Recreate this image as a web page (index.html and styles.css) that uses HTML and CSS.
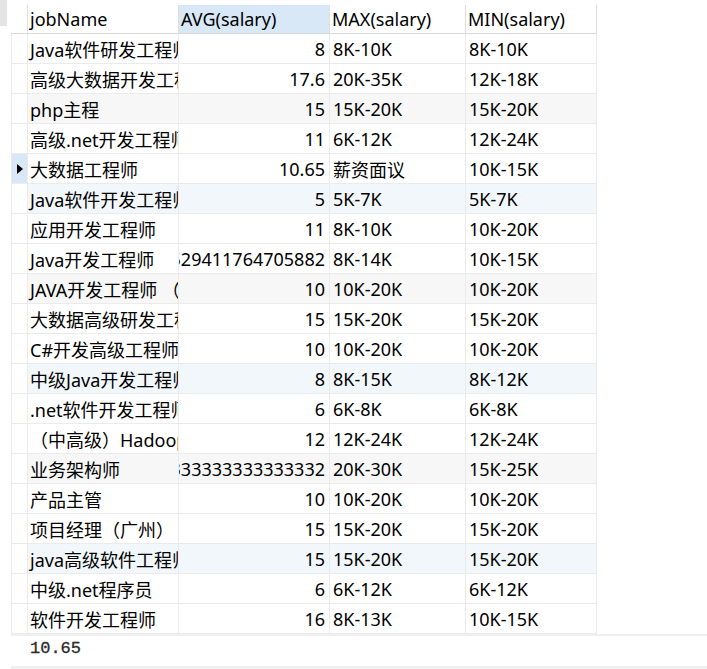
FILE: index.html
```html
<!DOCTYPE html>
<html>
<head>
<meta charset="utf-8">
<link rel="stylesheet" href="styles.css">
</head>
<body>
<div class="page">
  <div class="top">
    <div class="side"><div class="side-block"></div></div>
    <div class="grid">
      <div class="hd ind"></div>
      <div class="hd">jobName</div>
      <div class="hd sel">AVG(salary)</div>
      <div class="hd">MAX(salary)</div>
      <div class="hd">MIN(salary)</div>

      <div class="c ind"></div><div class="c t">Java软件研发工程师</div><div class="c n"><span>8</span></div><div class="c">8K-10K</div><div class="c">8K-10K</div>
      <div class="c ind"></div><div class="c t">高级大数据开发工程师</div><div class="c n"><span>17.6</span></div><div class="c">20K-35K</div><div class="c">12K-18K</div>
      <div class="c ind"></div><div class="c t g">php主程</div><div class="c n g"><span>15</span></div><div class="c g">15K-20K</div><div class="c g">15K-20K</div>
      <div class="c ind"></div><div class="c t">高级.net开发工程师</div><div class="c n"><span>11</span></div><div class="c">6K-12K</div><div class="c">12K-24K</div>
      <div class="c ind cur"><span class="tri"></span></div><div class="c t">大数据工程师</div><div class="c n"><span>10.65</span></div><div class="c">薪资面议</div><div class="c">10K-15K</div>
      <div class="c ind"></div><div class="c t b">Java软件开发工程师</div><div class="c n b"><span>5</span></div><div class="c b">5K-7K</div><div class="c b">5K-7K</div>
      <div class="c ind"></div><div class="c t">应用开发工程师</div><div class="c n"><span>11</span></div><div class="c">8K-10K</div><div class="c">10K-20K</div>
      <div class="c ind"></div><div class="c t">Java开发工程师</div><div class="c n"><span>11.529411764705882</span></div><div class="c">8K-14K</div><div class="c">10K-15K</div>
      <div class="c ind"></div><div class="c t g">JAVA开发工程师 （北京）</div><div class="c n g"><span>10</span></div><div class="c g">10K-20K</div><div class="c g">10K-20K</div>
      <div class="c ind"></div><div class="c t">大数据高级研发工程师</div><div class="c n"><span>15</span></div><div class="c">15K-20K</div><div class="c">15K-20K</div>
      <div class="c ind"></div><div class="c t">C#开发高级工程师</div><div class="c n"><span>10</span></div><div class="c">10K-20K</div><div class="c">10K-20K</div>
      <div class="c ind"></div><div class="c t b">中级Java开发工程师</div><div class="c n b"><span>8</span></div><div class="c b">8K-15K</div><div class="c b">8K-12K</div>
      <div class="c ind"></div><div class="c t">.net软件开发工程师</div><div class="c n"><span>6</span></div><div class="c">6K-8K</div><div class="c">6K-8K</div>
      <div class="c ind"></div><div class="c t">（中高级）Hadoop开发工程师</div><div class="c n"><span>12</span></div><div class="c">12K-24K</div><div class="c">12K-24K</div>
      <div class="c ind"></div><div class="c t g">业务架构师</div><div class="c n g"><span>18.333333333333332</span></div><div class="c g">20K-30K</div><div class="c g">15K-25K</div>
      <div class="c ind"></div><div class="c t">产品主管</div><div class="c n"><span>10</span></div><div class="c">10K-20K</div><div class="c">10K-20K</div>
      <div class="c ind"></div><div class="c t">项目经理（广州）</div><div class="c n"><span>15</span></div><div class="c">15K-20K</div><div class="c">15K-20K</div>
      <div class="c ind"></div><div class="c t b">java高级软件工程师</div><div class="c n b"><span>15</span></div><div class="c b">15K-20K</div><div class="c b">15K-20K</div>
      <div class="c ind"></div><div class="c t">中级.net程序员</div><div class="c n"><span>6</span></div><div class="c">6K-12K</div><div class="c">6K-12K</div>
      <div class="c ind"></div><div class="c t">软件开发工程师</div><div class="c n"><span>16</span></div><div class="c">8K-13K</div><div class="c">10K-15K</div>
    </div>
  </div>
  <div class="panel"><div class="panel-text">10.65</div></div>
</div>
</body>
</html>
```

FILE: styles.css
```css
html, body {
  margin: 0;
  padding: 0;
  background: #ffffff;
}

.page {
  width: 707px;
  height: 669px;
  display: flex;
  flex-direction: column;
  background: #ffffff;
  overflow: hidden;
}

.top {
  display: flex;
  height: 634px;
}

.side {
  width: 11px;
  flex: none;
}

.side-block {
  width: 7px;
  height: 26px;
  background: #e4e4e4;
}

.grid {
  margin-top: 5px;
  display: grid;
  grid-template-columns: 17px 151px 151px 136px 131px;
  grid-auto-rows: 30px;
  grid-template-rows: 29px;
  align-self: flex-start;
  font-family: "Noto Sans", "Noto Sans CJK SC", sans-serif;
  font-size: 18px;
  color: #000;
}

.hd {
  box-sizing: border-box;
  border-right: 1px solid #dedede;
  border-bottom: 1px solid #d9d9d9;
  padding: 0 3px 0 2px;
  display: flex;
  align-items: center;
  white-space: nowrap;
  overflow: hidden;
}

.hd.ind {
  padding: 0;
}

.hd.sel {
  background: #d9e8f7;
}

.c {
  box-sizing: border-box;
  border-right: 1px solid #ebebeb;
  border-bottom: 1px solid #ebebeb;
  padding: 0 3px 0 3px;
  display: flex;
  align-items: center;
  white-space: nowrap;
  overflow: hidden;
}

.c.ind {
  border-left: 1px solid #ebebeb;
  padding: 0;
  justify-content: center;
}

.c.t {
  padding-left: 2px;
  padding-right: 0;
}

.c.n {
  justify-content: flex-end;
  padding-right: 4px;
}

.c.n span {
  flex: none;
}

.c.g {
  background: #f7f7f7;
}

.c.b {
  background: #f2f7fc;
}

.c.cur {
  background: #d9e8f7;
}

.tri {
  width: 0;
  height: 0;
  border-top: 5px solid transparent;
  border-bottom: 5px solid transparent;
  border-left: 6px solid #000;
}

.panel {
  box-sizing: border-box;
  margin-left: 11px;
  height: 35px;
  border-top: 2px solid #f0f0f0;
  border-bottom: 3px solid #f0f0f0;
  background: #fff;
  display: flex;
  align-items: flex-start;
  padding-left: 19px;
  padding-top: 4px;
}

.panel-text {
  font-family: "Liberation Mono", monospace;
  font-size: 17px;
  line-height: 17px;
  color: #2a2a2a;
  -webkit-text-stroke: 0.3px #2a2a2a;
}
```
